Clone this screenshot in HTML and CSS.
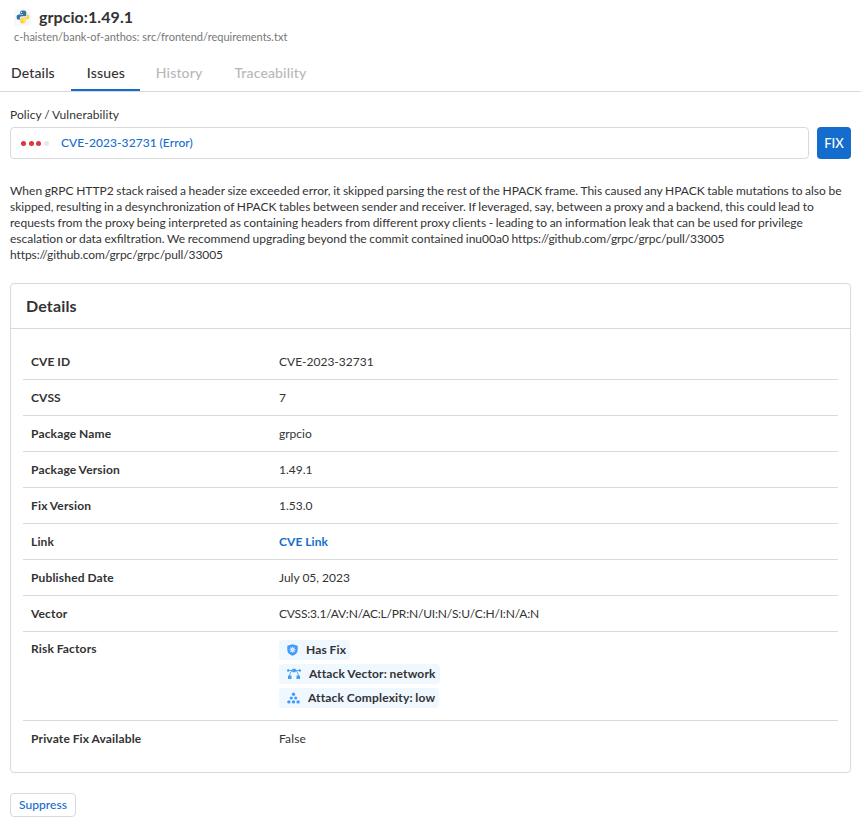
FILE: index.html
```html
<!DOCTYPE html>
<html lang="en">
<head>
<meta charset="utf-8">
<title>grpcio:1.49.1</title>
<link rel="stylesheet" href="styles.css">
</head>
<body>
<header class="header">
  <div class="title-row">
    <span class="lang-icon">
      <svg width="14" height="14" viewBox="0 0 24 24">
        <path fill="#3673a5" d="M11.9 1C7.500 1 7 3 7 4.500V7h5.200v.8H4.500C2.500 7.800 1 9.300 1 12.200s1.300 4.700 3.200 4.700H6.500v-2.700c0-1.900 1.600-3.300 3.400-3.300h5c1.600 0 2.800-1.300 2.800-2.900V4.500C17.700 2 15.500 1 11.900 1z"/>
        <path fill="#ffd545" d="M12.100 23c4.400 0 4.900-2 4.900-3.500V17h-5.200v-.8h7.700c2 0 3.500-1.500 3.500-4.400s-1.300-4.700-3.200-4.700h-1.600v2.600c0 1.900-1.600 3.300-3.400 3.300h-5C8.200 13 7 14.300 7 16v3.500C7 22 8.500 23 12.100 23z"/>
        <circle cx="9.400" cy="4.200" r="1.100" fill="#fff"/><circle cx="14.600" cy="19.800" r="1.100" fill="#fff"/>
      </svg>
    </span>
    <h1 class="title">grpcio:1.49.1</h1>
  </div>
  <div class="subtitle">c-haisten/bank-of-anthos: src/frontend/requirements.txt</div>
</header>
<nav class="tabs">
  <a class="tab">Details</a>
  <a class="tab active">Issues</a>
  <a class="tab disabled">History</a>
  <a class="tab disabled">Traceability</a>
</nav>
<main class="content">
  <div class="label">Policy / Vulnerability</div>
  <div class="policy-row">
    <div class="policy">
      <span class="severity"><i class="dot"></i><i class="dot"></i><i class="dot"></i><i class="dot off"></i></span>
      <a class="policy-link">CVE-2023-32731 (Error)</a>
    </div>
    <button class="fix">FIX</button>
  </div>
  <p class="description">When gRPC HTTP2 stack raised a header size exceeded error, it skipped parsing the rest of the HPACK frame. This caused any HPACK table mutations to also be<br>skipped, resulting in a desynchronization of HPACK tables between sender and receiver. If leveraged, say, between a proxy and a backend, this could lead to<br>requests from the proxy being interpreted as containing headers from different proxy clients - leading to an information leak that can be used for privilege<br>escalation or data exfiltration. We recommend upgrading beyond the commit contained inu00a0 <span class="url">https://github.com/grpc/grpc/pull/33005</span><br><span class="url">https://github.com/grpc/grpc/pull/33005</span></p>
  <section class="card">
    <h2 class="card-title">Details</h2>
    <dl class="rows">
      <div class="row"><dt>CVE ID</dt><dd>CVE-2023-32731</dd></div>
      <div class="row"><dt>CVSS</dt><dd>7</dd></div>
      <div class="row"><dt>Package Name</dt><dd>grpcio</dd></div>
      <div class="row"><dt>Package Version</dt><dd>1.49.1</dd></div>
      <div class="row"><dt>Fix Version</dt><dd>1.53.0</dd></div>
      <div class="row"><dt>Link</dt><dd><a class="cve-link">CVE Link</a></dd></div>
      <div class="row"><dt>Published Date</dt><dd class="date">July 05, 2023</dd></div>
      <div class="row"><dt>Vector</dt><dd class="vector">CVSS:3.1/AV:N/AC:L/PR:N/UI:N/S:U/C:H/I:N/A:N</dd></div>
      <div class="row risk">
        <dt>Risk Factors</dt>
        <dd class="chips">
          <span class="chip">
            <svg width="11" height="12" viewBox="0 0 11 12" fill="#419bf9"><path d="M5.500.3 10.700 1.800v4.300c0 2.600-2 4.500-5.200 5.700C2.300 10.600.3 8.700.3 6.100V1.800z"/><path d="M5.500 2.700v6M2.500 5.700h6M3.400 3.600l4.200 4.200M7.600 3.600 3.400 7.800" stroke="#d5eaff" stroke-width="1.100"/><circle cx="5.500" cy="5.700" r="1.900" fill="#d5eaff"/></svg>
            Has Fix</span>
          <span class="chip">
            <svg width="14" height="12" viewBox="0 0 14 12" fill="#419bf9"><path d="M1.500 2.500h11M5.500 2.500C3.600 3.800 2.800 5.500 2.700 8M8.500 2.500c1.900 1.300 2.700 3 2.800 5.500" fill="none" stroke="#419bf9" stroke-width=".9"/><circle cx="1.200" cy="2.500" r="1.200"/><circle cx="12.800" cy="2.500" r="1.200"/><rect x="5.300" y=".8" width="3.400" height="3.400" rx=".5"/><rect x="1" y="7.500" width="3.500" height="3.500" rx=".6"/><rect x="9.500" y="7.500" width="3.500" height="3.500" rx=".6"/></svg>
            Attack Vector: network</span>
          <span class="chip">
            <svg width="13" height="12" viewBox="0 0 13 12" fill="#419bf9"><circle cx="6.500" cy="2.200" r="1.700"/><circle cx="4.300" cy="6" r="1.600"/><circle cx="8.700" cy="6" r="1.600"/><circle cx="1.900" cy="9.900" r="1.700"/><circle cx="6.500" cy="9.900" r="1.700"/><circle cx="11.100" cy="9.900" r="1.700"/></svg>
            Attack Complexity: low</span>
        </dd>
      </div>
      <div class="row"><dt>Private Fix Available</dt><dd class="private-fix">False</dd></div>
    </dl>
  </section>
  <button class="suppress">Suppress</button>
</main>
</body>
</html>
```
FILE: styles.css
```css
* { box-sizing: border-box; }
body {
  margin: 0;
  background: #fff;
  color: #333;
  font: 12px/16px Lato, "Liberation Sans", sans-serif;
}
.header { height: 56px; padding: 7px 14px 0; }
.title-row { display: flex; align-items: center; height: 20px; }
.lang-icon {
  display: flex;
  align-items: center;
  justify-content: center;
  width: 17px;
  height: 17px;
  border-radius: 2px;
  background: #f5f9ff;
}
.title { margin: 0 0 0 8px; font-size: 16px; line-height: 20px; font-weight: 700; letter-spacing: .06px; }
.subtitle { margin-top: 3px; font-size: 11px; line-height: 14px; color: #777; }
.tabs {
  display: flex;
  height: 36px;
  padding-left: 11px;
  border-bottom: 1px solid #d9dadb;
  font-size: 14px;
  line-height: 34px;
  font-weight: 500;
  letter-spacing: .15px;
}
.tab { height: 35px; }
.tab.active {
  width: 69px;
  margin: 0 16px;
  padding-left: 1px;
  text-align: center;
  border-bottom: 2px solid #146dcc;
}
.tab.disabled { color: #b8b8b8; margin-right: 32px; }
.content { padding: 15px 10px 0; }
.label { line-height: 16px; letter-spacing: .07px; word-spacing: -.4px; }
.policy-row { display: flex; gap: 8px; margin-top: 4px; }
.policy {
  display: flex;
  align-items: center;
  flex: 1;
  height: 32px;
  padding-left: 10px;
  border: 1px solid #d9dadb;
  border-radius: 4px;
}
.severity { display: flex; gap: 2.700px; width: 40px; }
.dot { width: 5px; height: 5px; border-radius: 50%; background: #d9363e; }
.dot.off { background: #e7e7e7; }
.policy-link { color: #146dcc; font-weight: 500; letter-spacing: .08px; word-spacing: -.4px; }
.fix {
  width: 34px;
  height: 32px;
  padding: 0;
  border: 0;
  border-radius: 4px;
  background: #146dcc;
  color: #fff;
  font: 500 13px/16px Lato, sans-serif;
}
.description { margin: 24px 0 20px; white-space: nowrap; word-spacing: -.48px; }
.url { letter-spacing: -.1px; }
.card { height: 490px; border: 1px solid #d9dadb; border-radius: 4px; }
.card-title {
  height: 45px;
  margin: 0;
  padding-left: 15px;
  border-bottom: 1px solid #d9dadb;
  font-size: 16px;
  line-height: 44px;
  font-weight: 700;
  letter-spacing: .15px;
}
.rows { margin: 15px 12px 0; }
.row {
  display: flex;
  height: 36px;
  padding: 10px 8px 0;
  border-bottom: 1px solid #d9dadb;
}
.row:last-child { border-bottom: 0; }
dt { width: 248px; font-weight: 700; letter-spacing: .16px; word-spacing: -.4px; }
dd { margin: 0; }
.vector { letter-spacing: -.185px; }
.private-fix { letter-spacing: .15px; }
.cve-link { color: #146dcc; font-weight: 700; letter-spacing: .12px; word-spacing: -.4px; }
.row.risk { height: 89px; padding-top: 9px; }
.chips { display: flex; flex-direction: column; align-items: flex-start; gap: 4px; margin-top: -1px; }
.chip {
  display: flex;
  align-items: center;
  gap: 8px;
  height: 20px;
  padding: 0 4px 0 8px;
  border-radius: 4px;
  background: #eff7ff;
  font-weight: 700;
  letter-spacing: .16px;
  word-spacing: -.4px;
}
.suppress {
  display: block;
  width: 66px;
  height: 24px;
  margin-top: 20px;
  padding: 0;
  border: 1px solid #d9dadb;
  border-radius: 4px;
  background: #fff;
  color: #146dcc;
  font: 500 12px/16px Lato, sans-serif;
  letter-spacing: .05px;
}
```
